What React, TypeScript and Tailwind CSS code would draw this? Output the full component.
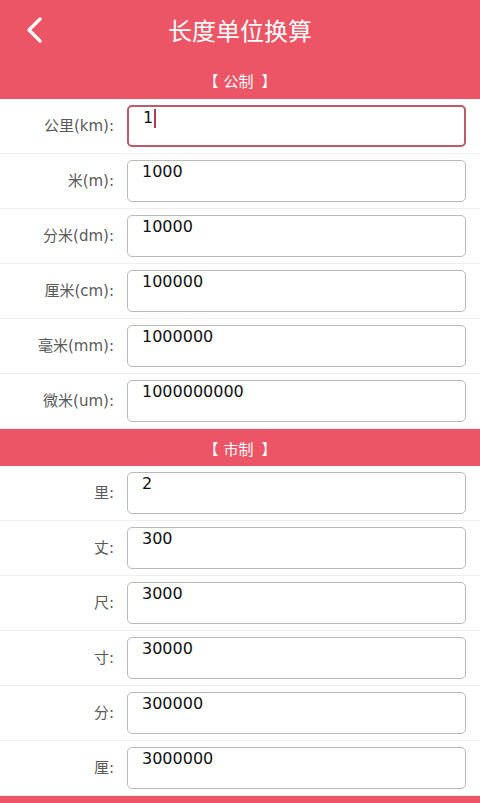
const FONT = { fontFamily: '"DejaVu Sans", "Noto Sans CJK SC", sans-serif' };
const CJK = { fontFamily: '"Noto Sans CJK SC", sans-serif' };

type Row = { label: string; value: string; focused?: boolean };

const metric: Row[] = [
  { label: "公里(km):", value: "1", focused: true },
  { label: "米(m):", value: "1000" },
  { label: "分米(dm):", value: "10000" },
  { label: "厘米(cm):", value: "100000" },
  { label: "毫米(mm):", value: "1000000" },
  { label: "微米(um):", value: "1000000000" },
];

const market: Row[] = [
  { label: "里:", value: "2" },
  { label: "丈:", value: "300" },
  { label: "尺:", value: "3000" },
  { label: "寸:", value: "30000" },
  { label: "分:", value: "300000" },
  { label: "厘:", value: "3000000" },
];

function SectionHeader({ title, h }: { title?: string; h: string }) {
  return (
    <div className={`${h} bg-[#eb5566] flex items-center justify-center pt-[4px] text-white text-[15px]`} style={CJK}>
      {title && (
        <>
          <span>【</span>
          <span className="ml-[5px] mr-[8px]">{title}</span>
          <span>】</span>
        </>
      )}
    </div>
  );
}

function UnitRow({ label, value, focused }: Row) {
  return (
    <div className="h-[55px] flex items-center border-b border-[#efefef]">
      <div className="w-[114px] text-right text-[15px] text-[#5a5a5a]">{label}</div>
      <div
        className={`ml-[13px] w-[339px] h-[42px] rounded-[5px] bg-white pl-[14px] pt-[2px] text-[16px] leading-[18px] text-[#111111] ${
          focused ? "border-2 border-[#bf5a6b] pl-[13px] pt-[1px]" : "border border-[#b9b9b9]"
        }`}
      >
        {value}
        {focused && <span className="inline-block w-[2px] h-[19px] bg-[#a8404f] align-top ml-[1px]" />}
      </div>
    </div>
  );
}

export default function App() {
  return (
    <div className="w-[480px] h-[803px] overflow-hidden bg-white" style={FONT}>
      <div className="relative h-[60px] bg-[#eb5566] flex items-center justify-center">
        <svg className="absolute left-[24px] top-[17px]" width="22" height="26" viewBox="0 0 22 26">
          <path d="M16 2 L5 13 L16 24" fill="none" stroke="white" strokeWidth="3.2" strokeLinecap="round" strokeLinejoin="round" />
        </svg>
        <span className="text-white text-[24px]" style={CJK}>长度单位换算</span>
      </div>
      <SectionHeader title="公制" h="h-[39px]" />
      {metric.map((r) => (
        <UnitRow key={r.label} {...r} />
      ))}
      <SectionHeader title="市制" h="h-[37px]" />
      {market.map((r) => (
        <UnitRow key={r.label} {...r} />
      ))}
      <SectionHeader h="h-[37px]" />
    </div>
  );
}
